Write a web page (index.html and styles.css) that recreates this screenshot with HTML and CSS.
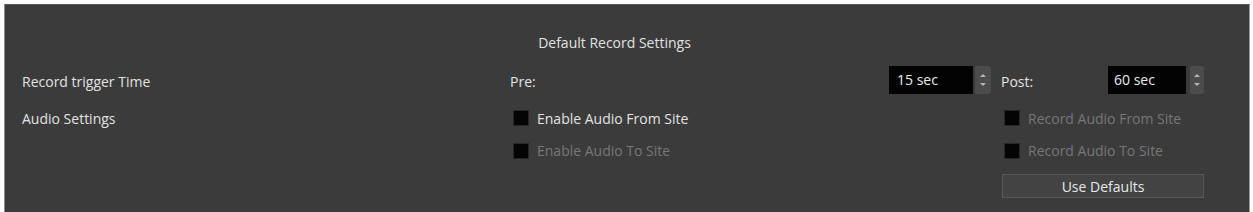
FILE: index.html
```html
<!DOCTYPE html>
<html lang="en">
  <head>
    <meta charset="UTF-8" />
    <title>Default Record Settings</title>
    <link rel="stylesheet" href="styles.css">
  </head>
  <body>
    <div class="panel">
      <div class="title">Default Record Settings</div>

      <!-- trigger time -->
      <div class="row row-time">
        <div class="c-label">Record trigger Time</div>
        <div class="c-mid">Pre:</div>
        <div class="spin">
          <div class="spin-box">15 sec</div>
          <div class="spin-btn">
            <svg width="16" height="28" viewBox="0 0 16 28">
              <path d="M5 11 L8 8 L11 11 Z" fill="#b4b4b4" />
              <path d="M5 17 L8 20 L11 17 Z" fill="#b4b4b4" />
            </svg>
          </div>
        </div>
        <div class="c-post">Post:</div>
        <div class="spin spin-post">
          <div class="spin-box">60 sec</div>
          <div class="spin-btn">
            <svg width="14" height="28" viewBox="0 0 14 28">
              <path d="M4 11 L7 8 L10 11 Z" fill="#b4b4b4" />
              <path d="M4 17 L7 20 L10 17 Z" fill="#b4b4b4" />
            </svg>
          </div>
        </div>
      </div>

      <!-- audio -->
      <div class="row row-audio">
        <div class="c-label">Audio Settings</div>
        <label class="c-mid check">
          <span class="box"></span>Enable Audio From Site
        </label>
        <div class="c-spacer"></div>
        <label class="c-right check disabled">
          <span class="box"></span>Record Audio From Site
        </label>
      </div>
      <div class="row row-audio2">
        <div class="c-label"></div>
        <label class="c-mid check disabled">
          <span class="box"></span>Enable Audio To Site
        </label>
        <div class="c-spacer"></div>
        <label class="c-right check disabled">
          <span class="box"></span>Record Audio To Site
        </label>
      </div>

      <div class="row row-btn">
        <div class="c-label"></div>
        <div class="c-mid"></div>
        <div class="c-spacer"></div>
        <div class="c-right">
          <button class="btn">Use Defaults</button>
        </div>
      </div>
    </div>
  </body>
</html>
```

FILE: styles.css
```css
* {
  box-sizing: border-box;
  margin: 0;
  padding: 0;
}
html,
body {
  height: 100%;
  background: #fff;
}
body {
  font-family: "Open Sans", "Liberation Sans", sans-serif;
  font-size: 14px;
  color: #e2e2e2;
  padding: 4px 3px 0 4px;
}
.panel {
  height: 100%;
  background: #3b3b3b;
  border-left: 1px solid #8c8c8c;
  border-top: 1px solid #5a5a5a;
  border-right: 1px solid #9a9a9a;
  padding-left: 17px;
}

.title {
  padding-top: 28px;
  line-height: 20px;
  height: 48px;
  text-align: center;
  padding-right: 42px;
}

.row {
  display: flex;
  align-items: center;
}
.row-time {
  margin-top: 13px;
  height: 28px;
  padding-top: 2px;
}
.row-audio {
  margin-top: 8px;
  height: 32px;
}
.row-audio2 {
  height: 32px;
  padding-top: 1px;
}
.row-btn {
  margin-top: 8px;
  height: 24px;
}

/* columns */
.c-label {
  width: 488px;
  flex: none;
}
.c-mid {
  width: 379px;
  flex: none;
}
.c-post {
  width: 117px;
  padding-left: 10px;
  flex: none;
}
.c-spacer {
  width: 112px;
  flex: none;
}
.c-right {
  width: 214px;
  flex: none;
}

/* spin box */
.spin {
  display: flex;
  gap: 2px;
  width: 102px;
  height: 28px;
  flex: none;
  margin-top: -2px;
}
.spin-box {
  width: 84px;
  background: #030303;
  padding-left: 8px;
  line-height: 28px;
  color: #ececec;
}
.spin-btn {
  width: 16px;
  background: #4c4c4c;
  border-radius: 3px;
}
.spin-btn svg {
  display: block;
}
.spin-post {
  gap: 4px;
}
.spin-post .spin-box {
  width: 78px;
  padding-left: 6px;
}
.spin-post .spin-btn {
  width: 14px;
}

/* checkbox */
.check {
  display: flex;
  align-items: center;
  padding-left: 3px;
}
.check .box {
  width: 16px;
  height: 16px;
  background: #040404;
  border: 1px solid #262626;
  margin-right: 8px;
}
.disabled {
  color: #777;
}

.btn {
  width: 202px;
  height: 24px;
  margin-left: 1px;
  background: #434343;
  border: 1px solid #575757;
  color: #e8e8e8;
  font: inherit;
}
```
